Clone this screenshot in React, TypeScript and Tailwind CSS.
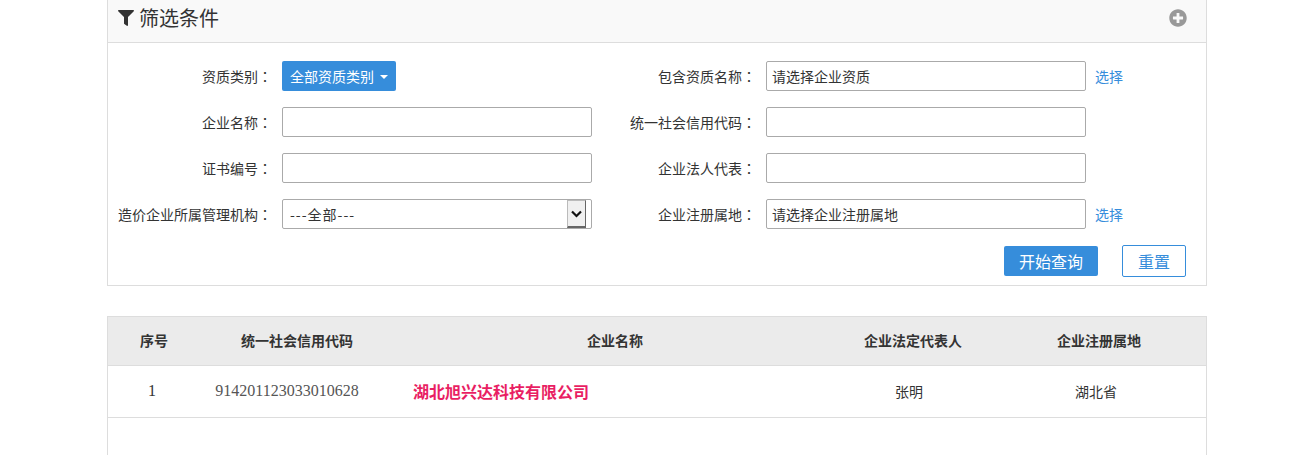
import { ReactNode } from "react";
import { FaFilter, FaPlusCircle } from "react-icons/fa";

const fontStack = "font-['Microsoft_YaHei','Noto_Sans_CJK_SC',sans-serif]";

function Label({ children }: { children: ReactNode }) {
  return (
    <label className="text-right text-[14px] leading-[30px] text-[#333] whitespace-nowrap">
      {children}
      <span className="font-['Noto_Sans_CJK_TC',sans-serif]">：</span>
    </label>
  );
}

function TextInput({ placeholder }: { placeholder?: string }) {
  return (
    <input
      readOnly
      value={placeholder ?? ""}
      className="h-[30px] w-full rounded-[2px] border border-[#aaa] bg-white px-[5px] text-[14px] text-[#333] outline-none"
    />
  );
}

function PickLink() {
  return <a className="text-[14px] leading-[30px] text-[#368ddb]">选择</a>;
}

export default function App() {
  return (
    <div className={`${fontStack} h-[455px] w-[1315px] overflow-hidden bg-white`}>
      <div className="ml-[107px] w-[1100px]">
        <div className="h-[286px] border border-t-0 border-[#ddd]">
          <div className="flex h-[43px] items-center justify-between border-b border-[#ddd] bg-[#f9f9f9] pb-[7px] pl-[10px] pr-[19px]">
            <div className="flex items-center gap-[5px] text-[#333]">
              <FaFilter className="text-[16px]" />
              <span className="text-[20px] leading-[26px]">筛选条件</span>
            </div>
            <FaPlusCircle className="text-[18px] text-[#999]" />
          </div>

          <div className="grid grid-cols-[164px_320px_164px_330px_1fr] gap-y-[16px] pt-[18px]">
            <Label>资质类别</Label>
            <div className="pl-[10px]">
              <button className="flex h-[30px] w-[114px] items-center justify-center gap-[6px] rounded-[2px] bg-[#368ddb] text-[14px] text-white">
                全部资质类别
                <span className="mt-[2px] border-x-[4px] border-t-[4px] border-x-transparent border-t-white" />
              </button>
            </div>
            <Label>包含资质名称</Label>
            <div className="pl-[10px]"><TextInput placeholder="请选择企业资质" /></div>
            <div className="pl-[9px]"><PickLink /></div>

            <Label>企业名称</Label>
            <div className="pl-[10px]"><TextInput /></div>
            <Label>统一社会信用代码</Label>
            <div className="pl-[10px]"><TextInput /></div>
            <div />

            <Label>证书编号</Label>
            <div className="pl-[10px]"><TextInput /></div>
            <Label>企业法人代表</Label>
            <div className="pl-[10px]"><TextInput /></div>
            <div />

            <Label>造价企业所属管理机构</Label>
            <div className="relative ml-[10px]">
              <select className="h-[30px] w-full appearance-none rounded-[2px] border border-[#aaa] bg-white px-[7px] text-[14px] tracking-[1px] text-[#333] outline-none">
                <option>---全部---</option>
              </select>
              <span className="pointer-events-none absolute right-[6px] top-[1px] flex h-[28px] w-[19px] items-center justify-center border border-b-2 border-[#bbb] border-b-[#666] border-r-[#666] bg-[#f0f0f0]">
                <svg width="11" height="8" viewBox="0 0 11 8">
                  <path d="M1 1.5 5.5 6 10 1.5" fill="none" stroke="#111" strokeWidth="2.2" />
                </svg>
              </span>
            </div>
            <Label>企业注册属地</Label>
            <div className="pl-[10px]"><TextInput placeholder="请选择企业注册属地" /></div>
            <div className="pl-[9px]"><PickLink /></div>
          </div>

          <div className="mt-[16px] flex items-center justify-end gap-[24px] pr-[20px]">
            <button className="h-[30px] w-[94px] rounded-[2px] bg-[#368ddb] text-[16px] text-white">开始查询</button>
            <button className="h-[32px] w-[64px] rounded-[2px] border border-[#368ddb] bg-white text-[16px] text-[#368ddb]">重置</button>
          </div>
        </div>

        <div className="mt-[30px] h-[200px] border border-[#ddd]">
          <table className="w-full table-fixed border-collapse">
            <colgroup>
              <col className="w-[92px]" />
              <col className="w-[194px]" />
              <col className="w-[442px]" />
              <col className="w-[156px]" />
              <col />
            </colgroup>
            <thead>
              <tr className="h-[48px] border-b border-[#ddd] bg-[#ebebeb] text-[14px] font-bold text-[#333]">
                <th>序号</th>
                <th>统一社会信用代码</th>
                <th>企业名称</th>
                <th className="pr-[2px]">企业法定代表人</th>
                <th>企业注册属地</th>
              </tr>
            </thead>
            <tbody>
              <tr className="h-[52px] border-b border-[#ddd] text-center text-[14px] text-[#333]">
                <td className="pr-[4px] font-['Liberation_Serif',serif] text-[16px]">1</td>
                <td className="pr-[20px] font-['Liberation_Serif',serif] text-[16px] text-[#555]">914201123033010628</td>
                <td className="pl-[19px] text-left text-[16px] font-bold text-[#e91e63]">湖北旭兴达科技有限公司</td>
                <td className="pr-[10px]">张明</td>
                <td className="pr-[6px]">湖北省</td>
              </tr>
            </tbody>
          </table>
        </div>
      </div>
    </div>
  );
}
